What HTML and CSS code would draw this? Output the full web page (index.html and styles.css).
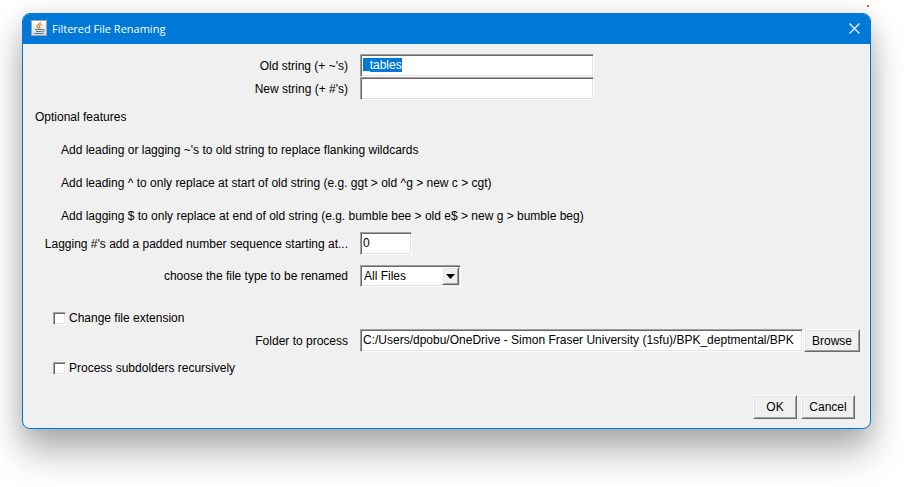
FILE: index.html
```html
<!DOCTYPE html>
<html lang="en">
<head>
<meta charset="utf-8">
<title>Filtered File Renaming</title>
<link rel="stylesheet" href="styles.css">
</head>
<body>
<span class="marker"></span>
<main class="window">
  <header class="titlebar">
    <svg class="app-icon" viewBox="0 0 16 16" aria-hidden="true">
      <defs><linearGradient id="tile" x1="0" y1="0" x2="0" y2="1"><stop offset="0" stop-color="#fff"/><stop offset="1" stop-color="#d6d9dc"/></linearGradient></defs>
      <rect x=".5" y=".5" width="15" height="15" fill="url(#tile)" stroke="#a9a49e"/>
      <path d="M9.500 2C10 4 6 4.500 6 6.200 6 7.300 7.300 7.500 7.500 8.500M10.800 4.500C8.800 5 8 5.800 8.700 6.800 9.200 7.500 8.900 8 8.300 8.500" fill="none" stroke="#ec7c1c" stroke-width="1.200"/>
      <path d="M4 9.500H11M5 11.500H10.500M3.500 13.500H12.500M11 9.500C14 8.700 14 11.500 11 11.800" fill="none" stroke="#52768f" stroke-width="1"/>
    </svg>
    <h1 class="title">Filtered File Renaming</h1>
    <button class="close" type="button" aria-label="Close">
      <svg viewBox="0 0 11 11" aria-hidden="true"><path d="M.5 .5L10.500 10.500M10.500 .5L.5 10.500" fill="none" stroke="#fff" stroke-width="1.200"/></svg>
    </button>
  </header>
  <form class="body">
    <div class="row"><label class="label" for="old">Old string (+ ~'s)</label><input class="field wide" id="old" type="text" value="_tables"></div>
    <div class="row"><label class="label" for="new">New string (+ #'s)</label><input class="field wide" id="new" type="text"></div>
    <p class="note">Optional features</p>
    <p class="note hint">Add leading or lagging ~'s to old string to replace flanking wildcards</p>
    <p class="note hint">Add leading ^ to only replace at start of old string (e.g. ggt &gt; old ^g &gt; new c &gt; cgt)</p>
    <p class="note hint">Add lagging $ to only replace at end of old string (e.g. bumble bee &gt; old e$ &gt; new g &gt; bumble beg)</p>
    <div class="row"><label class="label" for="start">Lagging #'s add a padded number sequence starting at...</label><input class="field short" id="start" type="text" value="0"></div>
    <div class="row type-row"><label class="label" for="type">choose the file type to be renamed</label>
      <div class="picker"><select class="select" id="type"><option>All Files</option></select><span class="arrow"><svg viewBox="0 0 9 5" aria-hidden="true"><path d="M0 0H9L4.500 5Z"/></svg></span></div>
    </div>
    <div class="check"><input type="checkbox" id="ext"><label for="ext">Change file extension</label></div>
    <div class="row"><label class="label" for="folder">Folder to process</label>
      <div class="folder"><input class="field" id="folder" type="text" value="C:/Users/dpobu/OneDrive - Simon Fraser University (1sfu)/BPK_deptmental/BPK"><button class="button" type="button">Browse</button></div>
    </div>
    <div class="check last"><input type="checkbox" id="sub"><label for="sub">Process subdolders recursively</label></div>
    <footer class="actions"><button class="button ok" type="button">OK</button><button class="button" type="button">Cancel</button></footer>
  </form>
</main>
<script src="script.js"></script>
</body>
</html>
```
FILE: styles.css
```css
* { box-sizing: border-box; }
body {
  margin: 0;
  padding: 13px 49px 58px 22px;
  background: #fff;
  overflow: hidden;
  font: 12px/16px "Liberation Sans", Arial, sans-serif;
  color: #000;
}
.marker {
  position: absolute;
  top: 5px;
  right: 51px;
  width: 2px;
  height: 2px;
  background: #ff5a00;
}
.window {
  border: 1px solid #0078d7;
  border-radius: 8px;
  background: #f0f0f0;
  box-shadow: 0 24px 36px rgba(0, 0, 0, .28), 0 4px 24px rgba(0, 0, 0, .14);
  overflow: hidden;
}
.titlebar {
  display: flex;
  align-items: center;
  height: 30px;
  padding: 0 10px 0 8px;
  background: #0078d7;
  color: #fff;
}
.app-icon { width: 16px; height: 16px; margin-bottom: 2px; }
.title {
  flex: 1;
  margin: 0 0 0 5px;
  font: 11px/16px "Open Sans", "Noto Sans", sans-serif;
}
.close {
  display: flex;
  padding: 0;
  border: 0;
  margin-bottom: 2px;
  background: none;
}
.close svg { width: 11px; height: 11px; }
.body { padding: 10px 10px 9px 12px; }
.row {
  display: grid;
  grid-template-columns: 313px 1fr;
  column-gap: 12px;
  align-items: center;
}
.label { text-align: right; white-space: nowrap; }
.field, .picker {
  height: 23px;
  border: 1px solid;
  border-color: #a0a0a0 #fff #fff #a0a0a0;
  border-radius: 0;
  background: #fff;
  box-shadow: inset 1px 1px #696969, inset -1px -1px #e3e3e3;
}
.field {
  min-width: 0;
  padding: 0 2px 2px;
  font: inherit;
  color: #000;
  outline: 0;
}
.field::selection { background: #0078d7; color: #fff; }
.wide { width: 234px; }
.short { width: 52px; }
.note { margin: 0; padding-top: 1px; line-height: 32px; }
.hint { padding-left: 26px; }
.type-row { height: 42px; }
.picker {
  display: grid;
  width: 101px;
  height: 22px;
  padding: 1px;
}
.select, .arrow { grid-area: 1 / 1; }
.select {
  appearance: none;
  padding: 0 0 0 2px;
  border: 0;
  background: none;
  font: inherit;
  color: #000;
  outline: 0;
}
.arrow {
  display: grid;
  place-items: center;
  justify-self: end;
  width: 17px;
  pointer-events: none;
}
.arrow svg { width: 9px; height: 5px; }
.arrow, .button {
  border: 1px solid;
  border-color: #fff #696969 #696969 #fff;
  background: #f0f0f0;
  box-shadow: inset 1px 1px #e3e3e3, inset -1px -1px #a0a0a0;
}
.check {
  display: flex;
  align-items: center;
  gap: 3px;
  height: 22px;
  margin-top: 10px;
  padding-left: 18px;
}
.last { height: 32px; margin-top: 0; }
.check input {
  appearance: none;
  width: 13px;
  height: 13px;
  margin: 0;
  border: 1px solid;
  border-color: #a0a0a0 #fff #fff #a0a0a0;
  background: #fff;
  box-shadow: inset 1px 1px #696969, inset -1px -1px #e3e3e3;
}
.check input:checked { background: #0078d7; }
.folder { display: flex; gap: 1px; min-width: 0; }
.folder .field { flex: 1; }
.button {
  height: 23px;
  width: 56px;
  padding: 0;
  border-radius: 0;
  font: inherit;
  color: #000;
}
.actions {
  display: flex;
  justify-content: flex-end;
  gap: 4px;
  margin-top: 11px;
  padding-right: 5px;
}
.actions .button { width: 54px; height: 24px; }
.actions .ok { width: 44px; }
```
FILE: script.js
```js
const oldField = document.getElementById("old");
oldField.focus();
oldField.select();
```
